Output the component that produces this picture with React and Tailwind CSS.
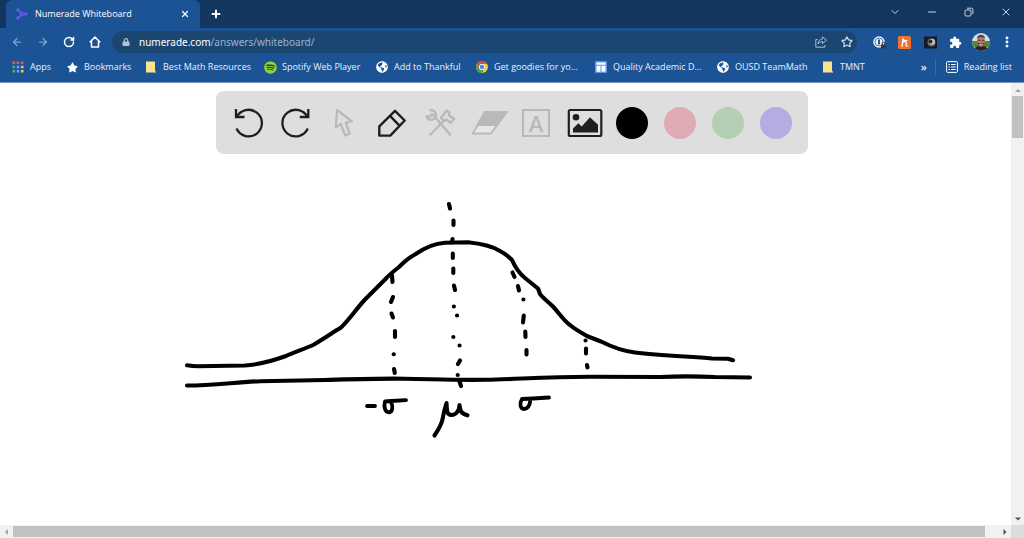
import { ArrowLeft, ArrowRight, RotateCw, House, Star, Plus, X, ChevronDown, Minus, EllipsisVertical } from "lucide-react";
import { FaSpotify, FaStar, FaLock, FaGlobeAmericas } from "react-icons/fa";
import { MdExtension } from "react-icons/md";

const AppsIcon = () => (
  <svg viewBox="0 0 12 12" className="size-3" aria-hidden="true">
    {["#ea5a50", "#ea5a50", "#ea5a50", "#58b06c", "#6aa2f7", "#f2c14b", "#58b06c", "#6aa2f7", "#f2c14b"].map((c, i) => (
      <rect key={i} x={0.5 + (i % 3) * 4.2} y={0.5 + Math.floor(i / 3) * 4.2} width="2.6" height="2.6" fill={c} />
    ))}
  </svg>
);
const FolderIcon = () => (
  <svg viewBox="0 0 12 12" className="size-3" aria-hidden="true">
    <path d="M1 .5h9v9l1 2H1z" fill="#fbe38e" />
    <path d="M10 9.5l1 2H9z" fill="#e2bd55" />
  </svg>
);
const ChromeIcon = () => (
  <svg viewBox="0 0 24 24" className="size-3" aria-hidden="true">
    <circle cx="12" cy="12" r="12" fill="#f7c93c" />
    <path d="M1.6 6A12 12 0 0 1 22.4 6H12a6 6 0 0 0-5.2 9z" fill="#e2473b" />
    <path d="M1.6 6A12 12 0 0 0 12 24l5.2-9a6 6 0 0 1-10.4 0z" fill="#3fa657" />
    <circle cx="12" cy="12" r="5.8" fill="#fff" />
    <circle cx="12" cy="12" r="4.5" fill="#4b86ee" />
  </svg>
);
const SitesIcon = () => (
  <svg viewBox="0 0 12 12" className="size-3" aria-hidden="true">
    <rect width="12" height="12" rx="1" fill="#5f95ee" />
    <path d="M1.5 1.5h9v2.3h-9zM1.5 4.8h4v6h-4zM6.5 4.8h4v6h-4z" fill="#fff" />
  </svg>
);

const bookmarks = [
  { label: "Apps", icon: <AppsIcon />, width: "w-[54px]" },
  { label: "Bookmarks", icon: <FaStar className="size-[11px] text-white" />, width: "w-[79px]" },
  { label: "Best Math Resources", icon: <FolderIcon />, width: "w-[119px]" },
  { label: "Spotify Web Player", icon: <span className="flex rounded-full bg-[#16351d]"><FaSpotify className="size-[13px] text-[#8ed43c]" /></span>, width: "w-[112px]" },
  { label: "Add to Thankful", icon: <FaGlobeAmericas className="size-3 text-white" />, width: "w-[100px]" },
  { label: "Get goodies for yo...", icon: <ChromeIcon />, width: "w-[119px]" },
  { label: "Quality Academic D...", icon: <SitesIcon />, width: "w-[122px]" },
  { label: "OUSD TeamMath", icon: <FaGlobeAmericas className="size-3 text-white" />, width: "w-[105px]" },
  { label: "TMNT", icon: <FolderIcon />, width: "w-[54px]" },
];

function TabStrip() {
  return (
    <header className="flex h-7 items-stretch bg-[#13365f] text-white">
      <div className="ml-1.5 flex w-[194px] items-center rounded-t-md bg-[#1b5395] px-2.5">
        <svg viewBox="0 0 12 12" className="size-3" aria-hidden="true">
          <path d="M1.5 1.5L11 6 1.5 10.5 4 6z" fill="#5b56e0" />
          <circle cx="2" cy="2" r="1.7" fill="#6a5cf0" />
          <circle cx="2" cy="10" r="1.7" fill="#6a5cf0" />
          <circle cx="9.8" cy="6" r="1.8" fill="#5a5be8" />
        </svg>
        <h1 className="ml-[7px] flex-1 text-[9px] leading-7">Numerade Whiteboard</h1>
        <button aria-label="Close tab"><X className="size-2.5" strokeWidth={3} /></button>
      </div>
      <button aria-label="New tab" className="ml-2.5"><Plus className="size-3" strokeWidth={4} /></button>
      <div className="ml-auto flex items-center pb-1 text-[#c5d3e4]">
        <button aria-label="Search tabs" className="flex w-[37px] justify-center"><ChevronDown className="size-3" strokeWidth={2} /></button>
        <button aria-label="Minimize" className="flex w-[37px] justify-center"><Minus className="size-3" strokeWidth={2} /></button>
        <button aria-label="Restore" className="flex w-[37px] justify-center">
          <svg viewBox="0 0 10 10" className="size-2.5" fill="none" stroke="currentColor" aria-hidden="true">
            <rect x="1" y="3" width="6" height="6" rx="1" />
            <path d="M3 1.2h4.5a1.4 1.4 0 0 1 1.4 1.4V7" />
          </svg>
        </button>
        <button aria-label="Close" className="flex w-[37px] justify-center"><X className="size-3" strokeWidth={2} /></button>
      </div>
    </header>
  );
}

function AddressRow() {
  return (
    <div className="flex h-7 items-center text-white">
      <div className="flex w-28 items-center gap-3.5 pl-[11px]">
        <button aria-label="Back"><ArrowLeft className="size-3 text-[#7da3d0]" strokeWidth={2.5} /></button>
        <button aria-label="Forward"><ArrowRight className="size-3 text-[#7da3d0]" strokeWidth={2.5} /></button>
        <button aria-label="Reload"><RotateCw className="size-3" strokeWidth={3} /></button>
        <button aria-label="Home">
          <svg viewBox="0 0 12 12" className="size-3" fill="none" stroke="#fff" strokeWidth="1.5" strokeLinejoin="round" aria-hidden="true">
            <path d="M.8 6.200L6 1l5.200 5.200M2.500 5v6h7V5" />
          </svg>
        </button>
      </div>
      <div className="flex h-[22px] flex-1 items-center rounded-full bg-[#1c4672] pr-1 pl-2.5">
        <FaLock className="size-2 text-[#b4c3d4]" />
        <p className="ml-[9px] flex-1 font-['Noto_Sans',sans-serif] text-[10px] leading-4 text-[#9db3cc]">
          <span className="text-white">numerade.com</span>/answers/whiteboard/
        </p>
        <button aria-label="Share">
          <svg viewBox="0 0 12 12" className="size-3" fill="none" stroke="#a9bdd3" aria-hidden="true">
            <path d="M2.5 3.5H.8v7.7h9V9M7.5 1l4 3.2-4 3.2V5.6C5.3 5.6 4 6.4 3 8c.2-2.800 1.700-4.800 4.500-5.200z" strokeLinejoin="round" />
          </svg>
        </button>
        <button aria-label="Bookmark this page" className="ml-3.5"><Star className="size-3 text-[#cfdbe8]" strokeWidth={2.5} /></button>
      </div>
      <div className="flex w-[167px] items-center pl-[10px]">
        <button aria-label="Password manager" className="flex w-[25px] justify-center">
          <svg viewBox="0 0 13 13" className="size-[13px]" aria-hidden="true">
            <circle cx="6" cy="6" r="5.800" fill="#e8f0f8" />
            <circle cx="6" cy="6" r="4" fill="none" stroke="#4a84c2" />
            <path d="M6 3.600v4.800" stroke="#1c4672" strokeWidth="1.800" />
            <rect x="8" y="8.500" width="5" height="4" rx=".8" fill="#353535" />
            <path d="M9.200 8.500V7.600a1.300 1.300 0 0 1 2.600 0v.9" fill="none" stroke="#353535" />
          </svg>
        </button>
        <button aria-label="Honey" className="flex w-[25px] justify-center">
          <svg viewBox="0 0 13 13" className="size-[13px]" aria-hidden="true">
            <rect width="13" height="13" rx="1.500" fill="#f07032" />
            <path d="M5 2.500L4 10.500M4.600 6.500c1.500-1.500 4-1.200 3.700.5L8 9.300c0 .8.600 1 1.200.6M5.200 3.500c1.300 1.200 2.500 1.300 4 .8" fill="none" stroke="#fff" strokeWidth="1.200" strokeLinecap="round" />
          </svg>
        </button>
        <button aria-label="Moon" className="flex w-[26px] justify-center">
          <svg viewBox="0 0 13 13" className="size-[13px]" aria-hidden="true">
            <rect width="13" height="12" y=".5" fill="#141b26" />
            <circle cx="7.500" cy="6.500" r="4" fill="#6f6a62" />
            <circle cx="8" cy="5.800" r="3" fill="#c9c3b5" />
            <circle cx="6.500" cy="5.500" r="2" fill="#2c2d31" />
          </svg>
        </button>
        <button aria-label="Extensions" className="flex w-[25px] justify-center"><MdExtension className="size-[13px]" /></button>
        <button aria-label="Profile" className="flex w-[26px] justify-center">
          <svg viewBox="0 0 18 18" className="size-[18px]" aria-hidden="true">
            <clipPath id="face"><circle cx="9" cy="9" r="9" /></clipPath>
            <g clipPath="url(#face)">
              <rect width="18" height="18" fill="#d6dbe0" />
              <path d="M0 8h18v6H0z" fill="#59823b" />
              <path d="M1 18c1-4 4-5 8-5s7 1 8 5z" fill="#23262d" />
              <ellipse cx="9" cy="8.200" rx="4" ry="5.800" fill="#b77c69" />
              <path d="M5 5.500c0-5 8-5 8 0-2.500-1.800-5.500-1.800-8 0z" fill="#5a423b" />
              <path d="M5.500 7.300h2.800M9.700 7.300h2.800" stroke="#4b3533" />
              <path d="M5.200 9.500c.5 5.500 7 5.500 7.600 0-1.600 1.200-6 1.200-7.600 0z" fill="#5b3f38" />
              <path d="M7 11c1.300.7 2.700.7 4 0v.9c-1.300.8-2.700.8-4 0z" fill="#f2e8e4" />
            </g>
          </svg>
        </button>
        <button aria-label="Menu" className="flex w-[25px] justify-center"><EllipsisVertical className="size-3.5" strokeWidth={3} /></button>
      </div>
    </div>
  );
}

function BookmarksBar() {
  return (
    <nav className="flex h-[26px] items-center pr-3 pb-1 pl-3 text-[9px] leading-4 text-[#eaf1f9]">
      {bookmarks.map((b) => (
        <a key={b.label} href="#" className={`${b.width} flex shrink-0 items-center whitespace-nowrap`}>
          <span className="mr-1.5 flex w-3 shrink-0 justify-center">{b.icon}</span>
          {b.label}
        </a>
      ))}
      <button aria-label="More bookmarks" className="ml-auto pr-2 text-[11px] font-semibold">»</button>
      <button className="flex items-center border-l border-[#3c6ca5] pl-2.5 whitespace-nowrap">
        <svg viewBox="0 0 12 12" className="mr-1.5 size-3" fill="none" stroke="#fff" aria-hidden="true">
          <rect x=".6" y=".6" width="10.800" height="10.800" rx="1" />
          <path d="M2.500 3.500H4M5 3.500h4.500M2.500 6H4M5 6h4.500M2.500 8.500H4M5 8.500h4.500" />
        </svg>
        Reading list
      </button>
    </nav>
  );
}

const DARK = "#1d1f21";
const DIM = "#b9b9b9";

const tools = [
  {
    label: "Undo",
    art: (
      <g fill="none" stroke={DARK} strokeWidth="2.300">
        <path d="M12 10v8h8.500M12.500 18.600A13.300 13.300 0 1 1 12.500 29.600" />
      </g>
    ),
  },
  {
    label: "Redo",
    art: (
      <g fill="none" stroke={DARK} strokeWidth="2.300">
        <path d="M36.300 10v8h-8.500M35.800 18.600A13.300 13.300 0 1 0 35.800 29.600" />
      </g>
    ),
  },
  {
    label: "Select",
    art: <path d="M17 11l-1.200 17.300 5-3.300L25.200 36.500l4.300-1.800-3.700-11 6.200-1.400z" fill="none" stroke={DIM} strokeWidth="2.200" strokeLinejoin="round" />,
  },
  {
    label: "Pen",
    art: (
      <g fill="none" stroke={DARK} strokeWidth="2.400" strokeLinejoin="round">
        <path d="M27 11.800l9.700 9.700L22.300 36.600h-11v-9.300zM22 16.800l9.700 10" />
      </g>
    ),
  },
  {
    label: "Tools",
    art: (
      <g fill="none" stroke={DIM} strokeWidth="2.300" strokeLinejoin="round">
        <path d="M13.500 11.500A5 5 0 0 1 19.500 18.500L34.700 36.200M19.500 18.500A5.200 5.200 0 0 1 10.300 17.300L14.500 17.300 15.800 15z" />
        <path d="M13.800 36.200L28.500 21M25 19L30.500 11.500l3 2-.6 3 5.300 3.500-3.700 3.800-4-3.300-2.500 1.500z" />
      </g>
    ),
  },
  {
    label: "Eraser",
    art: (
      <g stroke={DIM} strokeWidth="2" strokeLinejoin="round">
        <path d="M21 13h21.500L27 34.500H8.800z" fill="#e6e6e6" />
        <path d="M21 13h21.500L33 26H13.500z" fill={DIM} />
      </g>
    ),
  },
  { label: "Text", letter: "A" },
  {
    label: "Image",
    art: (
      <g>
        <rect x="8.800" y="11" width="32.500" height="26" rx="1.500" fill="none" stroke={DARK} strokeWidth="2.200" />
        <circle cx="16" cy="18.300" r="3.300" fill={DARK} />
        <path d="M13 33.500v-4l5.300-5.300 3.400 3.300 8.300-9.300 8 7.600v7.700z" fill={DARK} />
      </g>
    ),
  },
];

const swatches = [
  { label: "Black", color: "bg-black" },
  { label: "Pink", color: "bg-[#e0abb4]" },
  { label: "Green", color: "bg-[#b4cfb3]" },
  { label: "Purple", color: "bg-[#b3ade1]" },
];

function Toolbar() {
  return (
    <div role="toolbar" aria-label="Drawing tools" className="flex h-[63px] items-center rounded-lg bg-[#dedede] px-2">
      {tools.map((t) => (
        <button key={t.label} aria-label={t.label} className="flex size-12 items-center justify-center">
          {t.letter ? (
            <span className="flex size-7 items-center justify-center border-2 border-[#b9b9b9] text-[22px] leading-6 font-semibold text-[#b9b9b9]">{t.letter}</span>
          ) : (
            <svg viewBox="0 0 48 48" className="size-12" aria-hidden="true">{t.art}</svg>
          )}
        </button>
      ))}
      {swatches.map((s) => (
        <button key={s.label} aria-label={s.label} className="flex size-12 items-center justify-center">
          <span className={`${s.color} size-8 rounded-full`} />
        </button>
      ))}
    </div>
  );
}

function Drawing() {
  return (
    <svg viewBox="0 154 1011 371" className="block w-full" role="img" aria-label="Bell curve" fill="none" stroke="#000" strokeWidth="4.100" strokeLinecap="round" strokeLinejoin="round">
      <path d="M187 365.300C191 366 194 366.300 198 366.300L245 365.500C257 364.800 272 361 286 356C293 352.500 306 348.500 314 344.500C324 338.500 332 333 341 327.500C349 320 357 308 365 299.500L385 279.500C390 274 394 271 399 267C404 262 408 258 415 254.500C424 248 433 243.500 445 242.700L468 242.300C480 243.500 491 245.500 500 251C506 254 509 257 512 260C515 267 520 274 525 278L538 288.500L540 294C544 299 549 302.500 553 306.500C559 313 564 321 570 325C576 330 582 333 588 336.500L601 341.500C611 346.500 622 351 635 352.500C660 355.500 688 356.500 712 358.500L728 358.700L733 360.200" />
      <path d="M187 385.500C212 385.500 235 382.300 260 381.200L325 380C350 379.300 380 378.200 405 378.700C430 379 455 380.300 485 379.800C520 379 545 377 590 376.800L660 377C680 376 700 376.300 715 377L750 377.500" />
      <path d="M449 204L450 208.500M453.500 220.500V225M452.500 239L452 242.500M452.800 253.500V258M453.300 268.500V273M454 285.500L455 290M460 360.500L458 364M459 380L461 386" />
      <path d="M453.800 306.500h.1M457 315.500h.1M453.300 337h.1M459.500 345.500h.1M457.700 375h.1" />
      <path d="M392 275.500L392.500 282M393 297L391 302M391.500 313.500L393 317.500M395 331V337M394 369L394.800 373" />
      <path d="M393.700 354.300h.1" />
      <path d="M512.500 272.500L514.500 277M518 286L519 290.500M523.800 315.500L523 322.500M525.300 331.500L525.500 337M526.500 350V354.500" />
      <path d="M523.400 299.500h.1M585.500 340.500h.1" />
      <path d="M586 348.500V353.500M587 365L587.500 367.500" />
      <path d="M367 406H375M406 400.200L391 401L385 401.500C383.500 407 385 412 389 412.300C393 412 393 406 391 402" strokeWidth="3.800" />
      <path d="M434.500 435.500C439 429 442 424 443 417C444 411 445 408 446.500 403C447 409 446 414.500 451.500 415C457 415 459.500 409 459.500 405C460 411 461 413.500 467.500 415.300" />
      <path d="M549 397.500L533 398.500L522 399C519.500 403 520 409 524 409C528 409 530 404 530.500 399.500" strokeWidth="3.800" />
    </svg>
  );
}

function Arrow({ d, fill }) {
  return (
    <svg viewBox="0 0 12 12" className="size-3" aria-hidden="true"><path d={d} fill={fill} /></svg>
  );
}

export default function App() {
  return (
    <div className="flex min-h-screen flex-col overflow-hidden bg-white font-['Open_Sans','Noto_Sans',sans-serif]">
      <TabStrip />
      <div className="border-b border-[#6d97c9] bg-[#1b5395]">
        <AddressRow />
        <BookmarksBar />
      </div>
      <div className="flex flex-1">
        <main className="flex min-w-0 flex-1 flex-col">
          <div className="flex justify-center pt-2 pl-[13px]"><Toolbar /></div>
          <Drawing />
        </main>
        <div className="flex w-[13px] flex-col items-center bg-[#f1f1f1]">
          <button aria-label="Scroll up" className="flex h-[13px] items-center"><Arrow d="M3 8l3-3 3 3z" fill="#a3a3a3" /></button>
          <div className="h-[42px] w-[11px] bg-[#c1c1c1]" />
          <button aria-label="Scroll down" className="mt-auto flex h-[13px] items-center"><Arrow d="M3 4.500l3 3 3-3z" fill="#505050" /></button>
        </div>
      </div>
      <div className="flex h-[13px] items-center bg-[#f1f1f1]">
        <button aria-label="Scroll left" className="flex w-[13px]"><Arrow d="M8 3L5 6l3 3z" fill="#a3a3a3" /></button>
        <div className="h-[11px] flex-1 bg-[#c1c1c1]" />
        <button aria-label="Scroll right" className="ml-[13px] flex w-[13px] justify-center"><Arrow d="M4.500 3l3 3-3 3z" fill="#505050" /></button>
        <div className="h-[13px] w-[13px] bg-[#dcdcdc]" />
      </div>
    </div>
  );
}
